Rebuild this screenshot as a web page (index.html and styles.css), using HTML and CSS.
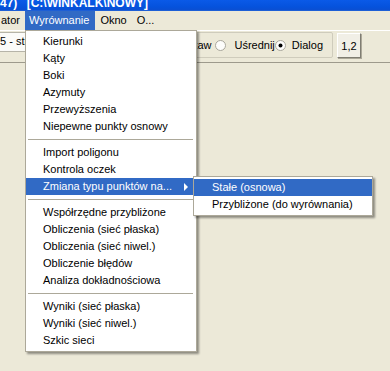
FILE: index.html
```html
<!DOCTYPE html>
<html lang="pl">
<head>
<meta charset="utf-8">
<link rel="stylesheet" href="styles.css">
</head>
<body>
<div class="window">
  <div class="titlebar"><span class="title">47) <span class="path">[C:\WINKALK\NOWY]</span></span></div>
  <div class="menubar">
    <span class="mb-item first">ator</span>
    <span class="mb-item active">Wyrównanie</span>
    <span class="mb-item">Okno</span>
    <span class="mb-item">O...</span>
  </div>
  <div class="toolbar">
    <div class="combo">5 - strona</div>
    <div class="group">
      <span class="lbl">Ustaw</span>
      <svg class="radio r1" width="11" height="11" viewBox="0 0 11 11"><circle cx="5.5" cy="5.5" r="5" fill="#fdfdfb" stroke="#a9a79c"/></svg>
      <span class="lbl">Uśrednij</span>
      <svg class="radio r2" width="11" height="11" viewBox="0 0 11 11"><circle cx="5.5" cy="5.5" r="5" fill="#fdfdfb" stroke="#a9a79c"/><circle cx="5.5" cy="5.5" r="2" fill="#000"/></svg>
      <span class="lbl">Dialog</span>
    </div>
    <button class="btn">1,2</button>
  </div>
  <div class="workspace"></div>

  <div class="menu">
    <div class="item">Kierunki</div>
    <div class="item">Kąty</div>
    <div class="item">Boki</div>
    <div class="item">Azymuty</div>
    <div class="item">Przewyższenia</div>
    <div class="item">Niepewne punkty osnowy</div>
    <div class="sep"></div>
    <div class="item">Import poligonu</div>
    <div class="item">Kontrola oczek</div>
    <div class="item hl">Zmiana typu punktów na...<span class="arrow"></span></div>
    <div class="sep"></div>
    <div class="item">Współrzędne przybliżone</div>
    <div class="item">Obliczenia (sieć płaska)</div>
    <div class="item">Obliczenia (sieć niwel.)</div>
    <div class="item">Obliczenie błędów</div>
    <div class="item">Analiza dokładnościowa</div>
    <div class="sep"></div>
    <div class="item">Wyniki (sieć płaska)</div>
    <div class="item">Wyniki (sieć niwel.)</div>
    <div class="item">Szkic sieci</div>
  </div>

  <div class="submenu">
    <div class="item hl">Stałe (osnowa)</div>
    <div class="item">Przybliżone (do wyrównania)</div>
  </div>
</div>
</body>
</html>
```

FILE: styles.css
```css
* { box-sizing: border-box; }
html, body { margin: 0; padding: 0; }
body {
  width: 390px;
  height: 371px;
  overflow: hidden;
  background: #ece9d8;
  font-family: "Liberation Sans", Arial, sans-serif;
  font-size: 11px;
  color: #000;
}
.window {
  position: relative;
  width: 390px;
  height: 371px;
  display: flex;
  flex-direction: column;
}
.titlebar {
  height: 11px;
  overflow: hidden;
  background: linear-gradient(#0a5ae8, #0552dc 70%, #0b4fd2);
  border-bottom: 1px solid #1d5fd6;
  flex: none;
}
.title {
  display: block;
  margin-top: -3px;
  font-weight: bold;
  font-size: 12px;
  line-height: 12px;
  color: #fff;
  white-space: nowrap;
}
.path { margin-left: 6px; }
.menubar {
  height: 19px;
  flex: none;
  display: flex;
  background: #ece9d8;
  line-height: 19px;
}
.mb-item { padding: 0 5px; white-space: nowrap; }
.mb-item.first { padding-left: 1px; padding-right: 5px; }
.mb-item.active { background: #316ac5; color: #fff; padding: 0 6px 0 4px; }
.toolbar {
  flex: none;
  height: 33px;
  border-top: 1px solid #fff;
  border-bottom: 1px solid #9d9a8c;
  display: flex;
  align-items: flex-start;
  background: #ece9d8;
}
.combo {
  margin-top: 1px;
  margin-left: -2px;
  width: 130px;
  height: 20px;
  background: #fbfbf8;
  border: 1px solid #b6b4a8;
  padding-left: 1px;
  line-height: 17px;
  white-space: nowrap;
  overflow: hidden;
}
.group {
  margin-top: 1px;
  margin-left: 6px;
  flex: 1;
  height: 26px;
  border: 1px solid #cfccbc;
  border-radius: 2px;
  display: flex;
  align-items: center;
  justify-content: flex-end;
  padding-right: 9px;
}
.lbl { white-space: nowrap; }
.radio { flex: none; }
.r1 { margin-left: 4px; margin-right: 8px; }
.r2 { margin-left: 0; margin-right: 6px; }
.btn {
  margin-top: 2px;
  margin-left: 4px;
  margin-right: 29px;
  width: 24px;
  height: 25px;
  padding: 0;
  font-family: inherit;
  font-size: 11px;
  color: #000;
  background: #f1efe6;
  border: 1px solid;
  border-color: #fff #7f7d72 #7f7d72 #fff;
  box-shadow: 1px 1px 0 #aca899;
}
.workspace { flex: 1; background: #ece9d8; }

.menu, .submenu {
  position: absolute;
  background: #fff;
  border: 1px solid #aca899;
  padding: 2px 0;
  box-shadow: 2px 2px 2px rgba(0, 0, 0, 0.4);
}
.menu { left: 25px; top: 30px; width: 172px; }
.submenu { left: 193px; top: 176px; width: 180px; }
.item {
  height: 17px;
  line-height: 17px;
  padding-left: 17px;
  white-space: nowrap;
  display: flex;
  align-items: center;
}
.submenu .item { padding-left: 18px; }
.item.hl { background: #316ac5; color: #fff; }
.arrow {
  margin-left: auto;
  margin-right: 8px;
  width: 0;
  height: 0;
  border-left: 4px solid #fff;
  border-top: 4px solid transparent;
  border-bottom: 4px solid transparent;
}
.sep {
  height: 1px;
  margin: 4px 3px 4px 2px;
  background: #aca899;
}
```
